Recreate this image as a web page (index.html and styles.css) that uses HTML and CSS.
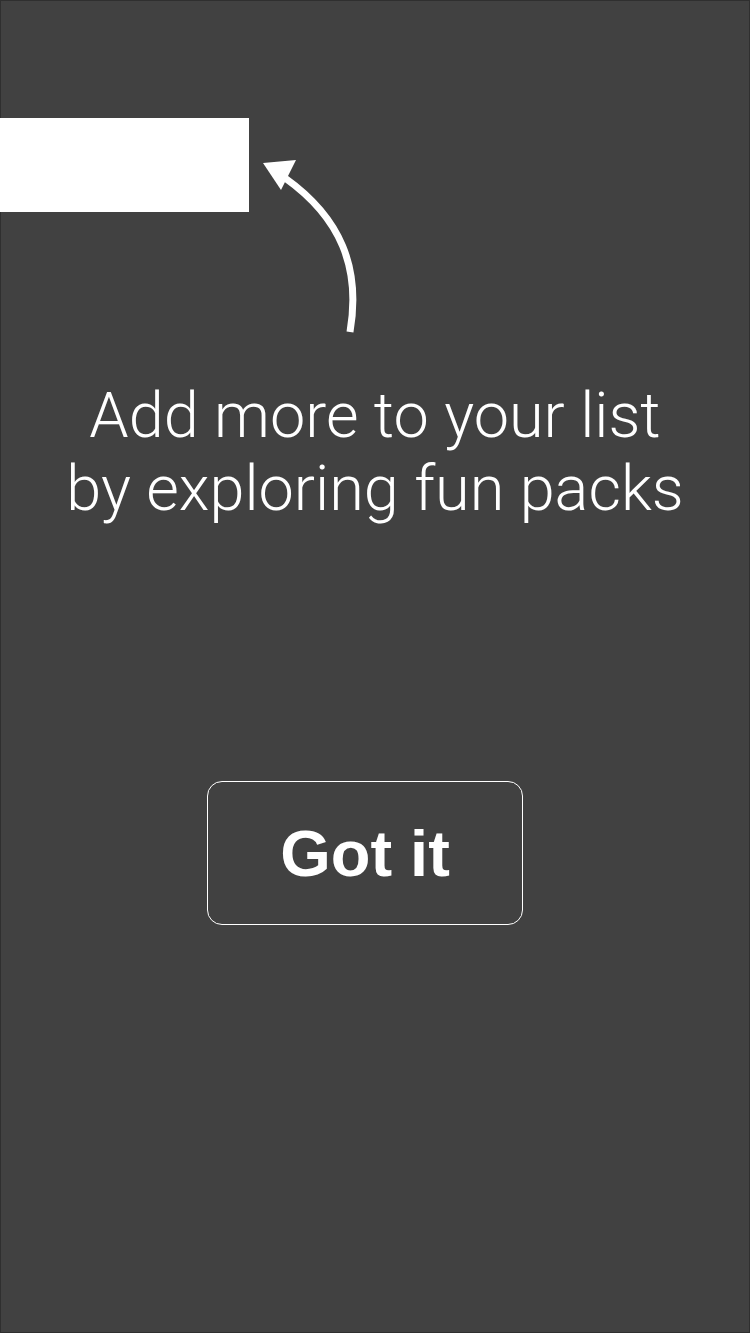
FILE: index.html
```html
<!DOCTYPE html>
<html>
<head>
<meta charset="utf-8">
<link rel="stylesheet" href="styles.css">
</head>
<body>
<div class="screen">
  <div class="top">
    <div class="spot"></div>
    <svg class="arrow" width="120" height="220" viewBox="0 0 120 220">
      <path d="M101 214 C 112 150, 92 100, 36 60" fill="none" stroke="#ffffff" stroke-width="7"/>
      <polygon points="14,45 47,42 32,72" fill="#ffffff"/>
    </svg>
  </div>
  <p class="message">Add more to your list<br>by exploring fun packs</p>
  <button class="got-it">Got it</button>
</div>
</body>
</html>
```
FILE: styles.css
```css
html, body {
  margin: 0;
  padding: 0;
  background: #414141;
}
.screen {
  width: 750px;
  height: 1333px;
  box-sizing: border-box;
  border: 1px solid #2f2f2f;
  background: #414141;
  display: flex;
  flex-direction: column;
  align-items: center;
  font-family: "Liberation Sans", Arial, sans-serif;
  color: #ffffff;
}
.top {
  align-self: stretch;
  display: flex;
  align-items: flex-start;
  padding-top: 117px;
  margin-left: -1px;
}
.spot {
  width: 249px;
  height: 94px;
  background: #ffffff;
}
.arrow {
  display: block;
}
.message {
  margin: 41px 0 0 0;
  font-family: Roboto, "Liberation Sans", Arial, sans-serif;
  font-size: 63px;
  line-height: 73px;
  font-weight: 300;
  text-align: center;
}
.got-it {
  margin: 256px 20px 0 0;
  width: 316px;
  height: 144px;
  box-sizing: border-box;
  border: 1.5px solid #ffffff;
  border-radius: 15px;
  background: transparent;
  color: #ffffff;
  font-family: "Liberation Sans", Arial, sans-serif;
  font-weight: 700;
  font-size: 65px;
  padding: 0;
}
```
